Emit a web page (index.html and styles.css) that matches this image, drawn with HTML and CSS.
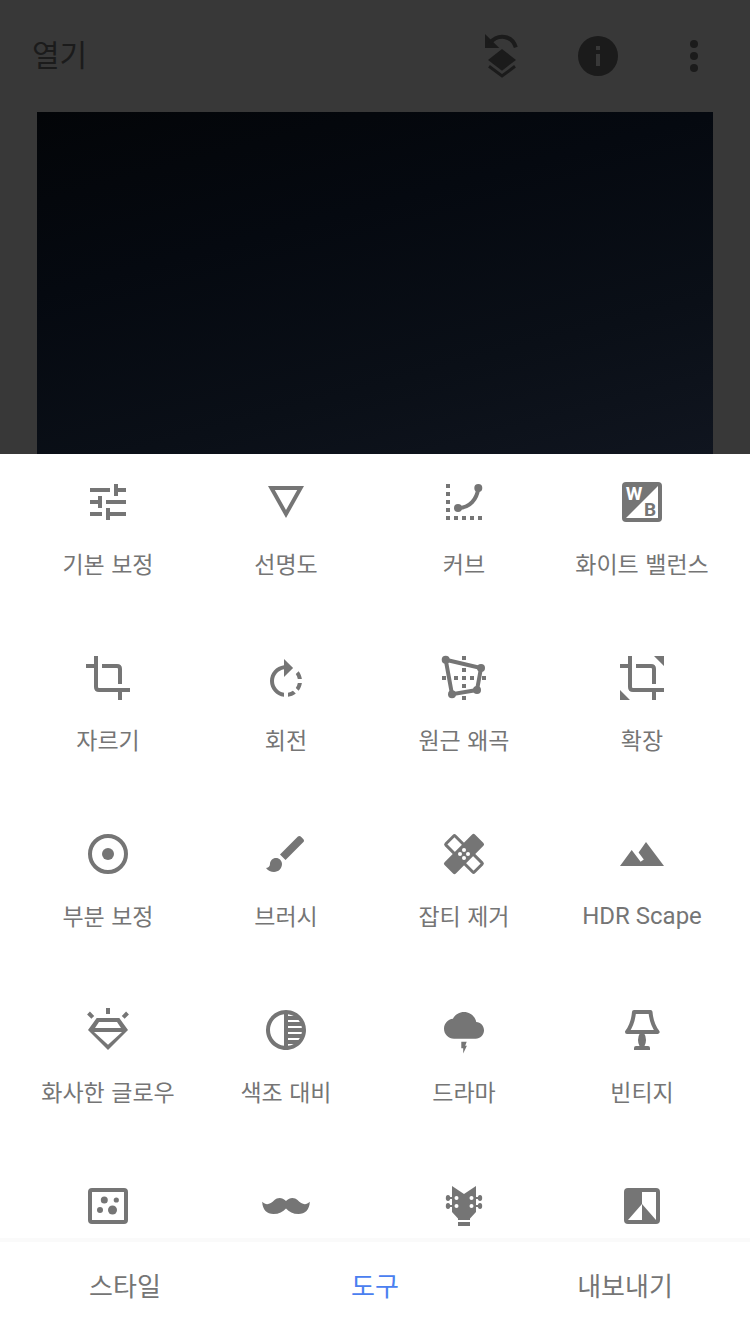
FILE: index.html
```html
<!DOCTYPE html>
<html lang="ko">
<head>
<meta charset="utf-8">
<meta name="viewport" content="width=device-width, initial-scale=1">
<title>도구</title>
<link rel="stylesheet" href="styles.css">
</head>
<body>
<header class="topbar">
  <button class="open">열기</button>
  <div class="actions">
    <button class="action" aria-label="수정 단계">
      <svg class="icon" viewBox="0 0 48 48"><path d="M7 2V16H21.300z"/><path class="line" d="M12 11C20 1.500 34 3 37.800 15.300"/><path d="M24 17L38 28L24 38.700L10 28Z"/><path class="line thin" d="M11 34.300L24 44L37 34.300"/></svg>
    </button>
    <button class="action" aria-label="정보">
      <svg class="icon" viewBox="0 0 48 48"><path fill-rule="evenodd" d="M24 4a20 20 0 1 0 0 40a20 20 0 1 0 0-40zM22 14h4v4h-4zM22 22h4v12h-4z"/></svg>
    </button>
    <button class="action" aria-label="더보기">
      <svg class="icon" viewBox="0 0 48 48"><circle cx="24" cy="12" r="4"/><circle cx="24" cy="24" r="4"/><circle cx="24" cy="36" r="4"/></svg>
    </button>
  </div>
</header>
<div class="photo"></div>
<main class="sheet">
  <div class="tools">
    <button class="tool">
      <svg class="icon" viewBox="0 0 48 48"><path d="M6 10h20v4H6zM30 6h4v4h8v4h-8v4h-4zM6 22h8v-4h4v12h-4v-4H6zM22 22h20v4H22zM6 34h12v4H6zM22 30h4v4h16v4H26v4h-4z"/></svg>
      <span class="label">기본 보정</span>
    </button>
    <button class="tool">
      <svg class="icon" viewBox="0 0 48 48"><path fill-rule="evenodd" d="M6 8H42L24 40ZM12.800 12H35.200L24 32Z"/></svg>
      <span class="label">선명도</span>
    </button>
    <button class="tool">
      <svg class="icon" viewBox="0 0 48 48"><path d="M6 6h4v4H6zM6 14h4v4H6zM6 22h4v4H6zM6 30h4v4H6zM6 38h4v4H6zM14 38h4v4h-4zM22 38h4v4h-4zM30 38h4v4h-4zM38 38h4v4h-4z"/><circle cx="18" cy="30" r="4"/><circle cx="38.300" cy="10" r="4"/><path class="line" d="M18 30C30 30 37 21 38.300 10"/></svg>
      <span class="label">커브</span>
    </button>
    <button class="tool">
      <svg class="icon" viewBox="0 0 48 48"><rect x="4" y="4" width="40" height="40" rx="4"/><path class="paper" d="M40 8V40H8Z"/><text class="mark paper" x="16" y="22">W</text><text class="mark" x="32" y="38">B</text></svg>
      <span class="label">화이트 밸런스</span>
    </button>

    <button class="tool">
      <svg class="icon" viewBox="0 0 48 48"><path class="line" d="M2 12H12M12 2V33Q12 36 15 36H46M36 36V46M18 12H33Q36 12 36 15V30"/></svg>
      <span class="label">자르기</span>
    </button>
    <button class="tool">
      <svg class="icon" viewBox="0 0 48 48"><path transform="translate(0 3) scale(2)" d="M15.550 5.550L11 1v3.070C7.060 4.560 4 7.920 4 12s3.050 7.440 7 7.930v-2.020c-2.840-.48-5-2.940-5-5.910s2.160-5.430 5-5.910V10l4.550-4.450zM19.930 11c-.17-1.390-.72-2.730-1.620-3.890l-1.420 1.420c.54.75.88 1.600 1.020 2.470h2.020zM13 17.900v2.020c1.390-.17 2.740-.71 3.900-1.610l-1.440-1.440c-.75.54-1.590.89-2.460 1.030zm3.890-2.420l1.420 1.410c.9-1.160 1.450-2.500 1.620-3.890h-2.020c-.14.87-.48 1.720-1.020 2.480z"/></svg>
      <span class="label">회전</span>
    </button>
    <button class="tool">
      <svg class="icon" viewBox="0 0 48 48"><path d="M22 2h4v4h-4zM22 14h4v4h-4zM22 22h4v4h-4zM22 30h4v4h-4zM22 42h4v4h-4zM2 22h4v4H2zM14 22h4v4h-4zM30 22h4v4h-4zM42 22h4v4h-4z"/><path class="line" d="M5.700 5.700L41 14L37 36L12 40.300Z"/><circle cx="5.700" cy="5.700" r="4"/><circle cx="41" cy="14" r="4"/><circle cx="37" cy="36" r="4"/><circle cx="12" cy="40.300" r="4"/></svg>
      <span class="label">원근 왜곡</span>
    </button>
    <button class="tool">
      <svg class="icon" viewBox="0 0 48 48"><path class="line" d="M2 12H12M12 2V33Q12 36 15 36H46M36 36V46M18 12H33Q36 12 36 15V30"/><path d="M36 2H46V12ZM2 36V46H12Z"/></svg>
      <span class="label">확장</span>
    </button>

    <button class="tool">
      <svg class="icon" viewBox="0 0 48 48"><circle class="line" cx="24" cy="24" r="18"/><circle cx="24" cy="24" r="6"/></svg>
      <span class="label">부분 보정</span>
    </button>
    <button class="tool">
      <svg class="icon" viewBox="0 0 48 48"><path transform="scale(2)" d="M7 14c-1.660 0-3 1.340-3 3 0 1.310-1.160 2-2 2 .92 1.220 2.490 2 4 2 2.210 0 4-1.790 4-4 0-1.660-1.340-3-3-3zm13.710-9.370l-1.340-1.340c-.39-.39-1.020-.39-1.410 0L9 12.250 11.750 15l8.960-8.960c.39-.39.39-1.020 0-1.410z"/></svg>
      <span class="label">브러시</span>
    </button>
    <button class="tool">
      <svg class="icon" viewBox="0 0 48 48"><rect class="line thin" x="4" y="17.500" width="40" height="13" rx="1" transform="rotate(45 24 24)"/><rect x="2.500" y="16" width="43" height="16" rx="2" transform="rotate(-45 24 24)"/><g class="paper"><circle cx="24" cy="20" r="2"/><circle cx="24" cy="28" r="2"/><circle cx="20" cy="24" r="2"/><circle cx="28" cy="24" r="2"/></g></svg>
      <span class="label">잡티 제거</span>
    </button>
    <button class="tool">
      <svg class="icon" viewBox="0 0 48 48"><path d="M2 36L13.700 20L22.600 31.800L25.800 29.400L20.600 22.400L28 12L46 36Z"/></svg>
      <span class="label latin">HDR Scape</span>
    </button>

    <button class="tool">
      <svg class="icon" viewBox="0 0 48 48"><path fill-rule="evenodd" d="M12.700 12H35.300L44 24L24 44L4 24ZM15 16H33L37 22H11ZM10 26H38L24 38.700ZM22 2h4v6h-4z"/><path class="line" d="M4.500 7L8.800 11.300M43.500 7L39.200 11.300"/></svg>
      <span class="label">화사한 글로우</span>
    </button>
    <button class="tool">
      <svg class="icon" viewBox="0 0 48 48"><path transform="scale(2)" d="M12 2C6.480 2 2 6.480 2 12s4.480 10 10 10 10-4.480 10-10S17.520 2 12 2zm-1 17.930c-3.940-.49-7-3.850-7-7.930s3.050-7.440 7-7.930v15.860zm2-15.860c1.030.13 2 .45 2.870.93H13v-.93zM13 7h5.240c.25.31.48.65.68 1H13V7zm0 3h6.740c.08.33.15.66.19 1H13v-1zm0 9.930V19h2.870c-.87.48-1.840.8-2.870.93zM18.240 17H13v-1h5.920c-.2.35-.43.69-.68 1zm1.500-3H13v-1h6.930c-.04.34-.11.67-.19 1z"/></svg>
      <span class="label">색조 대비</span>
    </button>
    <button class="tool">
      <svg class="icon" viewBox="0 0 48 48"><path transform="translate(4 -.67) scale(1.667)" d="M19.350 10.040C18.670 6.590 15.640 4 12 4 9.110 4 6.600 5.640 5.350 8.040 2.340 8.360 0 10.910 0 14c0 3.310 2.690 6 6 6h13c2.760 0 5-2.240 5-5 0-2.640-2.050-4.780-4.650-4.960z"/><path d="M21.300 35.700H26.700L25.200 39.700H26.900L23.200 47.500V42.300H21.300Z"/></svg>
      <span class="label">드라마</span>
    </button>
    <button class="tool">
      <svg class="icon" viewBox="0 0 48 48"><path class="line round" d="M16 6H32.500Q33.500 18 39.600 26H9Q15 18 16 6Z"/><path d="M22 27H26Q28 30 28 34Q28 37 26.500 40H30Q32 40 32 42V44H16V42Q16 40 18 40H21.500Q20 37 20 34Q20 30 22 27Z"/></svg>
      <span class="label">빈티지</span>
    </button>

    <button class="tool" aria-label="그레인 필름">
      <svg class="icon" viewBox="0 0 48 48"><rect class="line" x="6" y="8" width="36" height="32" rx="2"/><circle cx="20.300" cy="18" r="3.500"/><circle cx="32.300" cy="18" r="2.600"/><circle cx="16" cy="28" r="3"/><circle cx="28.500" cy="28" r="4.500"/></svg>
    </button>
    <button class="tool" aria-label="빈티지 필름">
      <svg class="icon" viewBox="0 0 48 48"><path d="M24 19C20 14.500 15 15.500 12.500 18C8.500 22 4.500 24 .2 19.800C.5 28 5 32 11.500 32C17 32 21 30 24 26.500C27 30 31 32 36.500 32C43 32 47.500 28 47.800 19.800C43.500 24 39.500 22 35.500 18C33 15.500 28 14.500 24 19Z"/></svg>
    </button>
    <button class="tool" aria-label="그런지">
      <svg class="icon" viewBox="0 0 48 48"><path d="M12 4L24 12L36 4V30L30 36.500V38H18V36.500L12 30ZM18 40H30V44H18ZM8 15H12V17H8ZM8 23H12V25H8ZM36 15H40V17H36ZM36 23H40V25H36Z"/><ellipse cx="8" cy="16" rx="2.200" ry="3"/><ellipse cx="8" cy="24" rx="2.200" ry="3"/><ellipse cx="40" cy="16" rx="2.200" ry="3"/><ellipse cx="40" cy="24" rx="2.200" ry="3"/><g class="paper"><circle cx="16.500" cy="16" r="2"/><circle cx="16.500" cy="24" r="2"/><circle cx="31.500" cy="16" r="2"/><circle cx="31.500" cy="24" r="2"/></g></svg>
    </button>
    <button class="tool" aria-label="흑백">
      <svg class="icon" viewBox="0 0 48 48"><rect x="6" y="6" width="36" height="36" rx="4"/><path class="paper" d="M24 10H38V38L24 22ZM24 22V38H10Z"/></svg>
    </button>
  </div>
  <nav class="tabs">
    <button class="tab">스타일</button>
    <button class="tab active" aria-current="page">도구</button>
    <button class="tab">내보내기</button>
  </nav>
</main>
</body>
</html>
```
FILE: styles.css
```css
* {
  box-sizing: border-box;
}

body {
  display: flex;
  flex-direction: column;
  height: 100vh;
  margin: 0;
  background: #383838;
  font-family: Roboto, "Noto Sans CJK KR", sans-serif;
}

button {
  padding: 0;
  border: 0;
  background: none;
  color: inherit;
  font: inherit;
  cursor: pointer;
}

.topbar {
  display: flex;
  flex: none;
  align-items: center;
  justify-content: space-between;
  height: 112px;
  padding: 0 32px;
  color: #1b1b1b;
}

.open {
  font-size: 30px;
  line-height: 40px;
}

.actions {
  display: flex;
  gap: 48px;
}

.icon {
  display: block;
  width: 48px;
  height: 48px;
  fill: currentColor;
}

.line {
  fill: none;
  stroke: currentColor;
  stroke-width: 4;
}

.thin {
  stroke-width: 3;
}

.round {
  stroke-linejoin: round;
}

.paper {
  fill: #fff;
}

.mark {
  font-size: 19px;
  font-weight: 700;
  text-anchor: middle;
}

.photo {
  flex: none;
  height: 342px;
  margin: 0 37px;
  background: linear-gradient(165deg, #030508 0%, #050910 35%, #0a0f17 70%, #10151f 100%);
}

.sheet {
  display: flex;
  flex: 1;
  flex-direction: column;
  min-height: 0;
  background: #fff;
  color: #757575;
}

.tools {
  display: grid;
  flex: 1;
  grid-template-columns: repeat(4, 1fr);
  grid-auto-rows: 176px;
  min-height: 0;
  padding: 0 19px;
  overflow: hidden;
}

.tool {
  display: flex;
  flex-direction: column;
  align-items: center;
  gap: 20px;
  padding-top: 24px;
}

.label {
  font-family: "Noto Sans CJK KR", sans-serif;
  font-size: 23px;
  line-height: 34px;
  white-space: nowrap;
}

.latin {
  font-family: Roboto, sans-serif;
  font-size: 24px;
  line-height: 36px;
}

.tabs {
  display: grid;
  flex: none;
  grid-template-columns: repeat(3, 1fr);
  border-top: 4px solid #fafafa;
}

.tab {
  padding: 25px 0 27px;
  font-size: 26px;
  line-height: 40px;
}

.active {
  color: #4a80f0;
}
```
